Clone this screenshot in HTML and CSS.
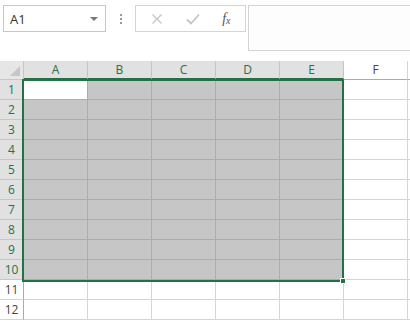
FILE: index.html
```html
<!DOCTYPE html>
<html>
<head>
<meta charset="utf-8">
<link rel="stylesheet" href="styles.css">
</head>
<body>
<div class="toolbar">
  <div class="namebox">
    <span class="nb-text">A1</span>
    <span class="nb-arrow"></span>
  </div>
  <div class="grip"><i></i><i></i><i></i></div>
  <div class="btns">
    <svg class="ic" width="14" height="14" viewBox="0 0 14 14"><path d="M2.5 2.5 L11.5 11.5 M11.5 2.5 L2.5 11.5" stroke="#c4c4c4" stroke-width="1.3" fill="none"/></svg>
    <svg class="ic" width="16" height="14" viewBox="0 0 16 14"><path d="M2 7.5 L6 11.5 L14 2.5" stroke="#c4c4c4" stroke-width="1.8" fill="none"/></svg>
    <span class="fx">f<sub>x</sub></span>
  </div>
  <div class="formula"></div>
</div>
<div class="sheet">
  <div class="grid">
    <div class="corner"><span class="tri"></span></div>
    <div class="ch sel">A</div><div class="ch sel">B</div><div class="ch sel">C</div><div class="ch sel">D</div><div class="ch sel">E</div><div class="ch">F</div><div class="ch"></div>

    <div class="rh sel">1</div><div class="c act"></div><div class="c s"></div><div class="c s"></div><div class="c s"></div><div class="c s"></div><div class="c"></div><div class="c"></div>
    <div class="rh sel">2</div><div class="c s"></div><div class="c s"></div><div class="c s"></div><div class="c s"></div><div class="c s"></div><div class="c"></div><div class="c"></div>
    <div class="rh sel">3</div><div class="c s"></div><div class="c s"></div><div class="c s"></div><div class="c s"></div><div class="c s"></div><div class="c"></div><div class="c"></div>
    <div class="rh sel">4</div><div class="c s"></div><div class="c s"></div><div class="c s"></div><div class="c s"></div><div class="c s"></div><div class="c"></div><div class="c"></div>
    <div class="rh sel">5</div><div class="c s"></div><div class="c s"></div><div class="c s"></div><div class="c s"></div><div class="c s"></div><div class="c"></div><div class="c"></div>
    <div class="rh sel">6</div><div class="c s"></div><div class="c s"></div><div class="c s"></div><div class="c s"></div><div class="c s"></div><div class="c"></div><div class="c"></div>
    <div class="rh sel">7</div><div class="c s"></div><div class="c s"></div><div class="c s"></div><div class="c s"></div><div class="c s"></div><div class="c"></div><div class="c"></div>
    <div class="rh sel">8</div><div class="c s"></div><div class="c s"></div><div class="c s"></div><div class="c s"></div><div class="c s"></div><div class="c"></div><div class="c"></div>
    <div class="rh sel">9</div><div class="c s"></div><div class="c s"></div><div class="c s"></div><div class="c s"></div><div class="c s"></div><div class="c"></div><div class="c"></div>
    <div class="rh sel">10</div><div class="c s"></div><div class="c s"></div><div class="c s"></div><div class="c s"></div><div class="c s"></div><div class="c"></div><div class="c"></div>
    <div class="rh">11</div><div class="c"></div><div class="c"></div><div class="c"></div><div class="c"></div><div class="c"></div><div class="c"></div><div class="c"></div>
    <div class="rh">12</div><div class="c"></div><div class="c"></div><div class="c"></div><div class="c"></div><div class="c"></div><div class="c"></div><div class="c"></div>
  </div>
  <div class="selbox"></div>
  <div class="handle"></div>
</div>
</body>
</html>
```
FILE: styles.css
```css
* { box-sizing: border-box; }
html, body { margin: 0; padding: 0; background: #fff; overflow: hidden; }
body { width: 410px; height: 324px; font-family: "Open Sans", "Noto Sans", sans-serif; color: #444; }

.toolbar { display: flex; align-items: flex-start; height: 61px; padding-top: 5px; }
.namebox {
  width: 103px; height: 27px; margin-left: 3px;
  border: 1px solid #c6c6c6; display: flex; align-items: center; justify-content: space-between;
  padding: 0 7px 0 6px;
}
.nb-text { font-size: 13px; color: #333; }
.nb-arrow { width: 0; height: 0; border-left: 4px solid transparent; border-right: 4px solid transparent; border-top: 4px solid #777; }
.grip { width: 29px; height: 27px; display: flex; flex-direction: column; align-items: center; justify-content: center; gap: 2px; }
.grip i { display: block; width: 2px; height: 2px; background: #9a9a9a; }
.btns {
  width: 111px; height: 27px; border: 1px solid #d4d4d4;
  display: flex; align-items: center; justify-content: space-around; padding: 0 4px 0 4px;
}
.fx { font-family: "Liberation Serif", serif; font-style: italic; font-size: 14px; color: #555; line-height: 1; }
.fx sub { font-size: 10px; vertical-align: -1px; }
.formula { flex: 1; height: 46px; margin-left: 2px; border: 1px solid #d4d4d4; border-right: none; background: #fdfdfd; }

.sheet { position: relative; overflow: hidden; width: 410px; }
.grid {
  display: grid;
  grid-template-columns: 24px repeat(6, 64px) 64px;
  grid-template-rows: 19px repeat(12, 20px);
}
.corner { background: #e6e6e6; border-right: 1px solid #c6c6c6; border-bottom: 1px solid #c6c6c6; position: relative; }
.tri { position: absolute; right: 3px; bottom: 3px; width: 0; height: 0; border-left: 10px solid transparent; border-bottom: 10px solid #c6c6c6; }
.ch {
  font-size: 12px; text-align: center; line-height: 18px; color: #444;
  background: #fff; border-right: 1px solid #d4d4d4; border-bottom: 1px solid #ababab;
}
.ch.sel { background: #e1e1e1; color: #217346; border-right-color: #c6c6c6; border-bottom: 2px solid #217346; }
.rh {
  font-size: 12px; text-align: center; line-height: 19px; color: #444;
  background: #fff; border-bottom: 1px solid #d4d4d4; border-right: 1px solid #ababab;
}
.rh.sel { background: #e1e1e1; color: #217346; border-bottom-color: #c6c6c6; }
.c { border-right: 1px solid #d4d4d4; border-bottom: 1px solid #d4d4d4; }
.c.s { background: #c6c6c6; border-right-color: #acacac; border-bottom-color: #acacac; }
.c.act { background: #fff; border-right-color: #acacac; border-bottom-color: #acacac; }

.selbox { position: absolute; left: 22px; top: 18px; width: 322px; height: 203px; border: 2px solid #217346; pointer-events: none; }
.handle { position: absolute; left: 340px; top: 217px; width: 6px; height: 6px; background: #217346; border: 1px solid #fff; }
```
